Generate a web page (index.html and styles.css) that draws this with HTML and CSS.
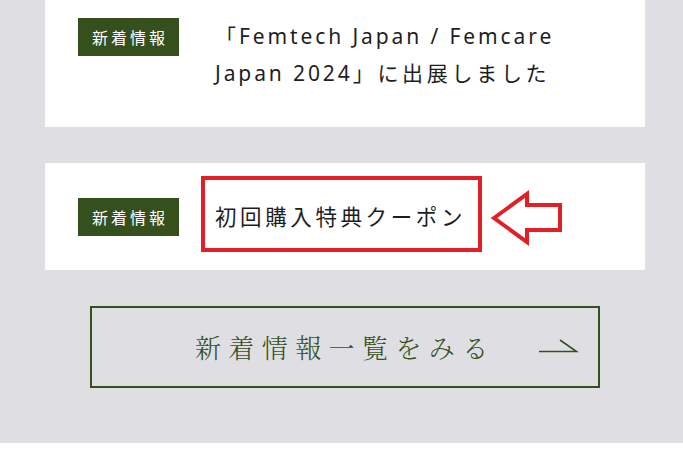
FILE: index.html
```html
<!DOCTYPE html>
<html lang="ja">
<head>
<meta charset="utf-8">
<title>新着情報</title>
<link rel="stylesheet" href="styles.css">
</head>
<body>
<section class="news">
  <article class="card card-top">
    <span class="badge">新着情報</span>
    <p class="title">「Femtech Japan / Femcare<br>Japan 2024<span class="ja">」に出展しました</span></p>
  </article>
  <article class="card card-mid">
    <span class="badge">新着情報</span>
    <p class="title title-coupon">初回購入特典クーポン</p>
    <span class="mark-box"></span>
    <svg class="mark-arrow" width="76" height="60" viewBox="0 0 76 60">
      <polygon points="6,30 39,6 39,17 72,17 72,42 39,42 39,54" fill="none" stroke="#e31e25" stroke-width="4" stroke-linejoin="miter"/>
    </svg>
  </article>
  <a class="more" href="#">
    <span class="more-text">新着情報一覧をみる</span>
    <svg class="more-arrow" width="40" height="16" viewBox="0 0 40 16">
      <path d="M0 13.5 H37.5 L21 2" fill="none" stroke="#35501d" stroke-width="1.6"/>
    </svg>
  </a>
</section>
</body>
</html>
```

FILE: styles.css
```css
* { box-sizing: border-box; }
html, body { margin: 0; padding: 0; background: #ffffff; }
body {
  font-family: "Noto Sans CJK JP", "Noto Sans", sans-serif;
  color: #1e1e1e;
}
.news {
  background: #dfdfe3;
  height: 443px;
  padding: 0 38px 0 45px;
  overflow: hidden;
}
.card {
  background: #ffffff;
  display: flex;
  padding: 0 33px;
  position: relative;
}
.card-top {
  height: 127px;
  padding-top: 18px;
  align-items: flex-start;
}
.card-mid {
  height: 107px;
  margin-top: 36px;
  align-items: center;
}
.badge {
  flex: none;
  width: 101px;
  height: 38px;
  background: #35501d;
  color: #ffffff;
  font-size: 16px;
  letter-spacing: 3px;
  padding-left: 3px;
  display: flex;
  align-items: center;
  justify-content: center;
}
.title {
  margin: 0 0 0 36px;
  font-family: "Noto Sans", "Noto Sans CJK JP", sans-serif;
  font-size: 21px;
  line-height: 35px;
  letter-spacing: 2.9px;
  color: #1e1e1e;
}
.title .ja { letter-spacing: 3.7px; }
.card-top .title { line-height: 37px; }
.title-coupon {
  font-size: 21.5px;
  letter-spacing: 3.6px;
}
.mark-box {
  position: absolute;
  left: 156px;
  top: 13px;
  width: 281px;
  height: 76px;
  border: 4px solid #e31e25;
}
.mark-arrow {
  position: absolute;
  left: 443px;
  top: 25px;
}
.more {
  display: flex;
  align-items: center;
  height: 82px;
  margin: 36px 45px 0;
  border: 2px solid #35501d;
  padding: 0 19px 0 103px;
  text-decoration: none;
  color: #35501d;
}
.more-text {
  font-family: "Noto Serif CJK JP", "Noto Sans CJK JP", serif;
  font-size: 26px;
  font-weight: 300;
  letter-spacing: 7.4px;
  line-height: 1;
}
.more-arrow {
  margin-left: auto;
  margin-top: -2px;
}
```
